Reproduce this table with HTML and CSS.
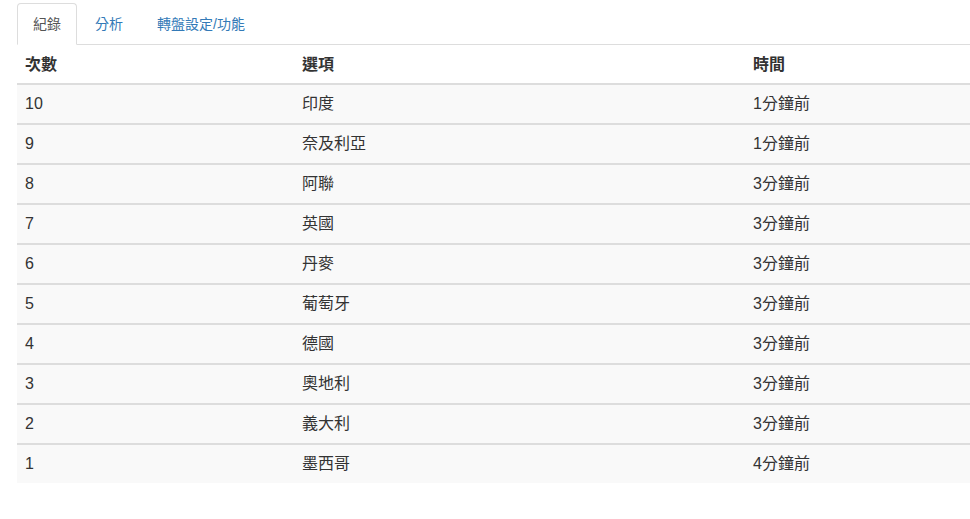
FILE: index.html
```html
<!DOCTYPE html>
<html lang="zh-Hant">
<head>
    <meta charset="UTF-8">
    <title>紀錄</title>
    <link rel="stylesheet" href="styles.css">
</head>
<body>
    <div class="page">
        <ul class="nav-tabs">
            <li class="active"><a href="#">紀錄</a></li>
            <li><a href="#">分析</a></li>
            <li><a href="#">轉盤設定/功能</a></li>
        </ul>
        <table class="record-table">
            <thead>
                <tr>
                    <th class="col-count">次數</th>
                    <th class="col-option">選項</th>
                    <th>時間</th>
                </tr>
            </thead>
            <tbody>
                <tr><td>10</td><td>印度</td><td>1分鐘前</td></tr>
                <tr><td>9</td><td>奈及利亞</td><td>1分鐘前</td></tr>
                <tr><td>8</td><td>阿聯</td><td>3分鐘前</td></tr>
                <tr><td>7</td><td>英國</td><td>3分鐘前</td></tr>
                <tr><td>6</td><td>丹麥</td><td>3分鐘前</td></tr>
                <tr><td>5</td><td>葡萄牙</td><td>3分鐘前</td></tr>
                <tr><td>4</td><td>德國</td><td>3分鐘前</td></tr>
                <tr><td>3</td><td>奧地利</td><td>3分鐘前</td></tr>
                <tr><td>2</td><td>義大利</td><td>3分鐘前</td></tr>
                <tr><td>1</td><td>墨西哥</td><td>4分鐘前</td></tr>
            </tbody>
        </table>
    </div>
</body>
</html>
```

FILE: styles.css
```css
body {
    margin: 0;
    font-family: "Liberation Sans", "Noto Sans CJK TC", sans-serif;
    font-size: 14px;
    line-height: 20px;
    color: #333;
    background-color: #fff;
}
.page {
    padding: 3px 0 0 17px;
}
.nav-tabs {
    display: flex;
    list-style: none;
    margin: 0;
    padding: 0;
    border-bottom: 1px solid #ddd;
}
.nav-tabs li {
    margin-right: 2px;
    margin-bottom: -1px;
}
.nav-tabs a {
    display: block;
    padding: 10px 15px;
    font-size: 14px;
    color: #337ab7;
    text-decoration: none;
    border: 1px solid transparent;
    border-radius: 4px 4px 0 0;
}
.nav-tabs .active a {
    color: #555;
    background-color: #fff;
    border-color: #ddd #ddd transparent;
}
.record-table {
    width: 100%;
    border-collapse: collapse;
    font-size: 16px;
}
.record-table th {
    text-align: left;
    font-weight: bold;
    padding: 10px 8px 8px;
    border-bottom: 2px solid #ddd;
}
.col-count {
    width: 261px;
}
.col-option {
    width: 435px;
}
.record-table td {
    padding: 9px 8px;
    border-top: 2px solid #ddd;
    background-color: #f9f9f9;
}
```
